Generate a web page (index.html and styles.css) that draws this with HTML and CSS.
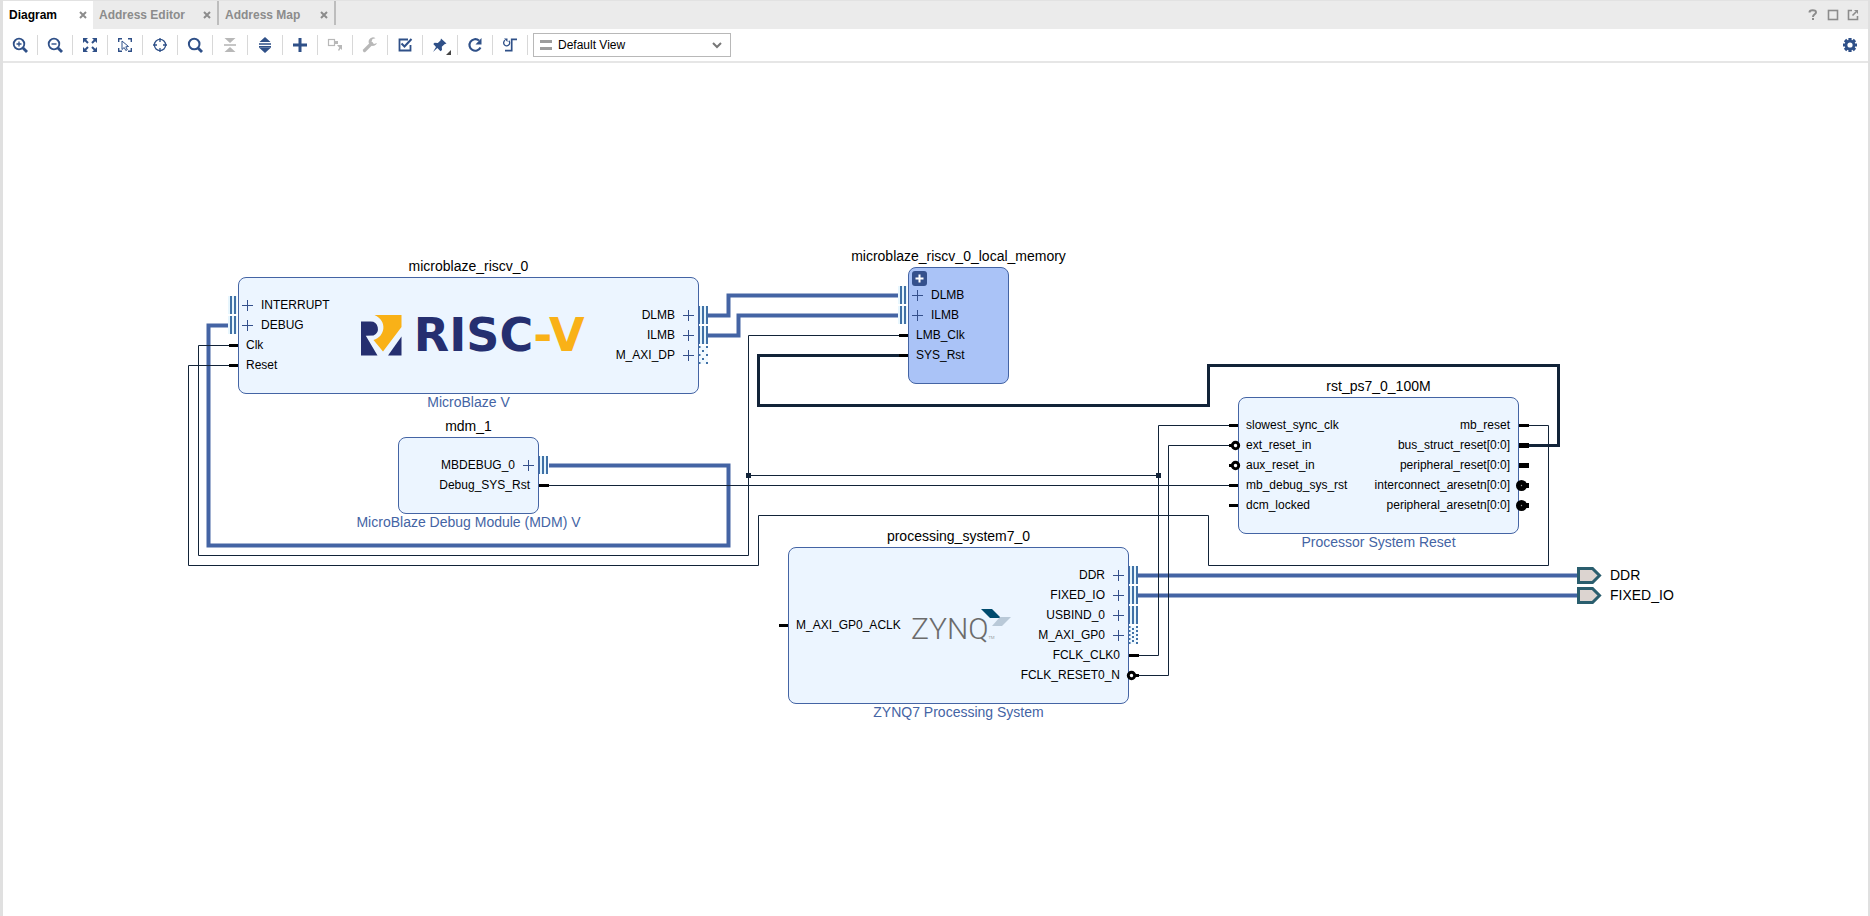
FILE: index.html
```html
<!DOCTYPE html>
<html lang="en">
<head>
<meta charset="utf-8">
<title>Block Design - Diagram</title>
<link rel="stylesheet" href="styles.css">
</head>
<body>
<div class="app">
  <header class="tabbar">
    <div class="tab tab-active">
      <button class="tab-label" type="button">Diagram</button>
      <button class="tab-close" type="button" aria-label="Close Diagram"><svg width="8" height="8" viewBox="0 0 8 8"><path d="M1 1l6 6M7 1l-6 6"/></svg></button>
    </div>
    <div class="tab tab-editor">
      <button class="tab-label" type="button">Address Editor</button>
      <button class="tab-close" type="button" aria-label="Close Address Editor"><svg width="8" height="8" viewBox="0 0 8 8"><path d="M1 1l6 6M7 1l-6 6"/></svg></button>
    </div>
    <div class="tab tab-map">
      <button class="tab-label" type="button">Address Map</button>
      <button class="tab-close" type="button" aria-label="Close Address Map"><svg width="8" height="8" viewBox="0 0 8 8"><path d="M1 1l6 6M7 1l-6 6"/></svg></button>
    </div>
    <div class="window-actions">
      <button class="win-btn" type="button" aria-label="Help"><svg width="12" height="12" viewBox="0 0 12 12"><path d="M2.500 3.500C2.500 .5 9 .5 9 3.300 9 5.500 6 5 6 8" fill="none" stroke="#8c8c8c" stroke-width="2"/><rect x="5" y="9" width="2" height="2" fill="#8c8c8c"/></svg></button>
      <button class="win-btn" type="button" aria-label="Maximize"><svg width="12" height="12" viewBox="0 0 12 12"><rect x="1.500" y="1.500" width="9" height="9" fill="none" stroke="#8c8c8c" stroke-width="1.600"/></svg></button>
      <button class="win-btn" type="button" aria-label="Float"><svg width="12" height="12" viewBox="0 0 12 12"><path d="M5 1.500H1.500v9h9V7" fill="none" stroke="#8c8c8c" stroke-width="1.600"/><path d="M5.500 6.500L9 3" stroke="#8c8c8c" stroke-width="1.600"/><path d="M7 1h4v4z" fill="#8c8c8c"/></svg></button>
    </div>
  </header>

  <div class="toolbar">
    <button class="tool" type="button" aria-label="Zoom In"><svg class="ico" viewBox="0 0 16 16"><circle cx="7" cy="7" r="5.300"/><path d="M11 11l4 4" stroke-width="2.800"/><path d="M4.500 7h5M7 4.500v5" stroke-width="1.300"/></svg></button>
    <button class="tool" type="button" aria-label="Zoom Out"><svg class="ico" viewBox="0 0 16 16"><circle cx="7" cy="7" r="5.300"/><path d="M11 11l4 4" stroke-width="2.800"/><path d="M4.500 7h5" stroke-width="1.400"/></svg></button>
    <button class="tool" type="button" aria-label="Zoom Fit"><svg class="ico" viewBox="0 0 16 16"><path d="M2 2l4 4M14 2l-4 4M2 14l4-4M14 14l-4-4" stroke-width="2"/><path d="M1 1h5L1 6zM15 1v5l-5-5zM1 15v-5l5 5zM15 15h-5l5-5z" class="solid"/></svg></button>
    <button class="tool" type="button" aria-label="Zoom to Selection"><svg class="ico" viewBox="0 0 16 16"><path d="M1.700 5V1.700H5M11 1.700h3.300V5M1.700 11v3.300H5M11 14.300h3.300V11" stroke-width="1.400"/><path d="M5 4v8.500l2.200-2 1.600 3 1.500-.8-1.500-2.900 2.700-.3z" stroke-width="1"/></svg></button>
    <button class="tool" type="button" aria-label="Auto Fit Selection"><svg class="ico" viewBox="0 0 16 16"><circle cx="8" cy="8" r="5.600" stroke-width="1.300"/><path d="M8 1v4M8 11v4M1 8h4M11 8h4" stroke-width="1.300"/></svg></button>
    <button class="tool" type="button" aria-label="Search"><svg class="ico" viewBox="0 0 16 16"><circle cx="7.200" cy="7" r="5.300" stroke-width="2"/><path d="M11 11l4 4" stroke-width="2.800"/></svg></button>
    <button class="tool" type="button" aria-label="Collapse All" disabled><svg class="ico" viewBox="0 0 16 16"><path d="M2.500 1h11L8 6zM2.500 15h11L8 10z" class="solid"/><path d="M2 8h12" stroke-width="1.600"/></svg></button>
    <button class="tool" type="button" aria-label="Expand All"><svg class="ico" viewBox="0 0 16 16"><path d="M8 0l5.500 5h-11zM8 16l5.500-5h-11z" class="solid"/><path d="M2 7h12M2 9.800h12" stroke-width="1.700"/></svg></button>
    <button class="tool" type="button" aria-label="Add IP"><svg class="ico" viewBox="0 0 16 16"><path d="M8 1v14M1 8h14" stroke-width="3"/></svg></button>
    <button class="tool" type="button" aria-label="Make External" disabled><svg class="ico" viewBox="0 0 16 16"><rect x="1.500" y="2.500" width="6" height="6" stroke-width="1.200"/><path d="M7 5h3" stroke-width="1.200"/><rect x="8" y="4" width="3" height="3" class="solid"/><path d="M10 8h5v5l-1.500-1.500L12 14l-1-1 1.300-2.300z" class="solid"/></svg></button>
    <button class="tool" type="button" aria-label="Customize Block" disabled><svg class="ico" viewBox="0 0 16 16"><path d="M2.500 13.500l7-7" stroke-width="3.200" stroke-linecap="round"/><path d="M13.500 1.200A4.300 4.300 0 1 0 15 6l-3 1-2.500-2.300 1-2.700z" class="solid"/></svg></button>
    <button class="tool" type="button" aria-label="Validate Design"><svg class="ico" viewBox="0 0 16 16"><path d="M11 2.500H2.500v11h11V8" stroke-width="1.800"/><path d="M4.500 6.500L7.500 9.500 14.500 2" stroke-width="2"/></svg></button>
    <button class="tool" type="button" aria-label="Pin"><svg class="ico" viewBox="0 0 16 16"><path d="M9 1.500l5.500 5-2 .8-2.700 2.500.2 3.200-1.500 1.200-3.200-3.100L1 15l3-5L1.300 7l1.300-1.300 3.200.3 2.700-2.600z" class="solid"/></svg><svg class="corner" width="5" height="5" viewBox="0 0 5 5"><path d="M5 0v5H0z"/></svg></button>
    <button class="tool" type="button" aria-label="Regenerate Layout"><svg class="ico" viewBox="0 0 16 16"><path d="M13.500 10.500A5.800 5.800 0 1 1 12 3.500" stroke-width="2.100"/><path d="M14.500 1v6.500H8.500z" class="solid"/></svg></button>
    <button class="tool" type="button" aria-label="Optimize Routing"><svg class="ico" viewBox="0 0 16 16"><path d="M6.800 3.700A3 3 0 1 1 3 3.300" stroke-width="1.300"/><path d="M2 1.500h3.500V5z" class="solid"/><path d="M3 13.700h6.700V2.300H15" stroke-width="1.700"/></svg></button>
    <div class="view-select">
      <svg width="12" height="10" viewBox="0 0 12 10"><path d="M0 0h12v3H0zM0 7h12v3H0z" fill="#9c9c9c"/></svg>
      <select aria-label="View"><option>Default View</option></select>
      <svg width="10" height="7" viewBox="0 0 10 7"><path d="M1 1l4 4 4-4" fill="none" stroke="#777" stroke-width="2"/></svg>
    </div>
    <button class="settings" type="button" aria-label="Settings"><svg width="16" height="16" viewBox="0 0 16 16"><path d="M8 1v14M1 8h14M3 3l10 10M13 3L3 13" stroke="#2f5088" stroke-width="3.200"/><circle cx="8" cy="8" r="5.300" fill="#2f5088"/><circle cx="8" cy="8" r="2.600" fill="#fff"/></svg></button>
  </div>

  <main class="canvas">
    <section class="node node-microblaze">
      <h2 class="node-name">microblaze_riscv_0</h2>
      <ul class="ports">
        <li class="port bus"><svg class="plus" viewBox="0 0 12 12"><path d="M0 6.500h11M5.500 1v11"/></svg>INTERRUPT</li>
        <li class="port bus"><svg class="plus" viewBox="0 0 12 12"><path d="M0 6.500h11M5.500 1v11"/></svg>DEBUG</li>
        <li class="port">Clk</li>
        <li class="port">Reset</li>
      </ul>
      <div class="riscv-logo">
        <svg width="41" height="41" viewBox="0 0 41 41"><path d="M0 6.500h9.500a7.300 7.300 0 0 1 3 14L4.800 20.800 16.500 40.500H0z" fill="#252f70"/><path d="M13.500 0H40.500v12L22 36.500 12.500 25C24 22 27 6 13.500 0z" fill="#f9b117"/><path d="M40.500 21.500v19H27z" fill="#252f70"/></svg>
        <span class="riscv-word">RISC<b>-V</b></span>
      </div>
      <ul class="ports ports-out">
        <li class="port bus">DLMB<svg class="plus" viewBox="0 0 12 12"><path d="M0 6.500h11M5.500 1v11"/></svg></li>
        <li class="port bus">ILMB<svg class="plus" viewBox="0 0 12 12"><path d="M0 6.500h11M5.500 1v11"/></svg></li>
        <li class="port bus">M_AXI_DP<svg class="plus" viewBox="0 0 12 12"><path d="M0 6.500h11M5.500 1v11"/></svg></li>
      </ul>
      <p class="node-type">MicroBlaze V</p>
    </section>

    <section class="node node-mdm">
      <h2 class="node-name">mdm_1</h2>
      <ul class="ports ports-out">
        <li class="port bus">MBDEBUG_0<svg class="plus" viewBox="0 0 12 12"><path d="M0 6.500h11M5.500 1v11"/></svg></li>
        <li class="port">Debug_SYS_Rst</li>
      </ul>
      <p class="node-type">MicroBlaze Debug Module (MDM) V</p>
    </section>

    <section class="node node-memory">
      <h2 class="node-name">microblaze_riscv_0_local_memory</h2>
      <button class="expand" type="button" aria-label="Expand hierarchy"><svg width="15" height="15" viewBox="0 0 15 15"><path d="M7.500 3.500v8M3.500 7.500h8" stroke="#fff" stroke-width="2"/></svg></button>
      <ul class="ports">
        <li class="port bus"><svg class="plus" viewBox="0 0 12 12"><path d="M0 6.500h11M5.500 1v11"/></svg>DLMB</li>
        <li class="port bus"><svg class="plus" viewBox="0 0 12 12"><path d="M0 6.500h11M5.500 1v11"/></svg>ILMB</li>
        <li class="port">LMB_Clk</li>
        <li class="port">SYS_Rst</li>
      </ul>
    </section>

    <section class="node node-zynq">
      <h2 class="node-name">processing_system7_0</h2>
      <ul class="ports">
        <li class="port">M_AXI_GP0_ACLK</li>
      </ul>
      <svg class="zynq-logo" width="100" height="32" viewBox="0 0 100 32"><text x="0" y="30">ZYNQ<tspan class="tm">TM</tspan></text><path d="M70 0h11l9 9H79z" fill="#004b6e"/><path d="M89 8h11l-9 9H81z" fill="#b9c9d8"/></svg>
      <ul class="ports ports-out">
        <li class="port bus">DDR<svg class="plus" viewBox="0 0 12 12"><path d="M0 6.500h11M5.500 1v11"/></svg></li>
        <li class="port bus">FIXED_IO<svg class="plus" viewBox="0 0 12 12"><path d="M0 6.500h11M5.500 1v11"/></svg></li>
        <li class="port bus">USBIND_0<svg class="plus" viewBox="0 0 12 12"><path d="M0 6.500h11M5.500 1v11"/></svg></li>
        <li class="port bus">M_AXI_GP0<svg class="plus" viewBox="0 0 12 12"><path d="M0 6.500h11M5.500 1v11"/></svg></li>
        <li class="port">FCLK_CLK0</li>
        <li class="port">FCLK_RESET0_N</li>
      </ul>
      <p class="node-type">ZYNQ7 Processing System</p>
    </section>

    <section class="node node-reset">
      <h2 class="node-name">rst_ps7_0_100M</h2>
      <ul class="ports">
        <li class="port">slowest_sync_clk</li>
        <li class="port">ext_reset_in</li>
        <li class="port">aux_reset_in</li>
        <li class="port">mb_debug_sys_rst</li>
        <li class="port">dcm_locked</li>
      </ul>
      <ul class="ports ports-out">
        <li class="port">mb_reset</li>
        <li class="port">bus_struct_reset[0:0]</li>
        <li class="port">peripheral_reset[0:0]</li>
        <li class="port">interconnect_aresetn[0:0]</li>
        <li class="port">peripheral_aresetn[0:0]</li>
      </ul>
      <p class="node-type">Processor System Reset</p>
    </section>

    <div class="ext-port ext-ddr"><svg width="25" height="17" viewBox="0 0 25 17"><path d="M1.500 1.500h14l7 7-7 7h-14z"/></svg>DDR</div>
    <div class="ext-port ext-fixed"><svg width="25" height="17" viewBox="0 0 25 17"><path d="M1.500 1.500h14l7 7-7 7h-14z"/></svg>FIXED_IO</div>

    <svg class="wires">
      <defs>
        <g id="bus-in"><path d="M-10-9.500H-1v18h-9z" fill="#e8f6fd"/><path d="M-8-9.500h2v18h-2zM-4-9.500h2v18h-2z" fill="#4071a6"/></g>
        <g id="bus-out"><path d="M0-9.500h9v18H0z" fill="#e8f6fd"/><path d="M0-9.500h1v18H0zM3-9.500h2v18H3zM7-9.500h2v18H7z" fill="#4071a6"/></g>
        <g id="dots-out"><path d="M0-9.500h9v18H0z" fill="#f2faff"/><path d="M.5-9.500v18M8-9.500v18" class="dots"/><path d="M4-5.500v14" class="dots"/></g>
        <g id="dots-dense"><path d="M0-9.500h9v18H0z" fill="#f2faff"/><path d="M.5-9.500v18M8-9.500v18M4-7.500v16" class="dots-fine"/></g>
        <path id="pin-in" d="M-9-1.500h9v3h-9z"/>
        <path id="pin-out" d="M0-1.500h10v3H0z"/>
        <path id="pin-wide" d="M0-2.500h10v5H0z"/>
        <g id="inv-in"><path d="M-9-1.500h4v3h-4z"/><circle cx="-2.500" r="3.200" fill="#fff" stroke="#000" stroke-width="3"/></g>
        <g id="inv-out"><path d="M5-1.500h5v3H5z"/><circle cx="2.500" r="3.200" fill="#fff" stroke="#000" stroke-width="3"/></g>
        <g id="inv-wide"><path d="M5-2.500h5v5H5z"/><circle cx="2.500" r="5.500"/><circle cx="2.500" r=".7" fill="#999"/></g>
      </defs>
      <g class="bus-wire">
        <path d="M226 262.500H205.500V482.500H725.500V402.500H546"/>
        <path d="M705 252.500H725.500V232.500H895"/>
        <path d="M705 272.500H735.500V252.500H895"/>
        <path d="M1135 512.500H1574M1135 532.500H1574"/>
      </g>
      <g class="wire">
        <path d="M226 282.500H195.500V492.500H745.500V272.500H896"/>
        <path d="M745.500 412.500H1155.500M1226 362.500H1155.500V592.500H1135"/>
        <path d="M226 302.500H185.500V502.500H755.500V452.500H1205.500V502.500H1545.500V362.500H1526"/>
        <path d="M546 422.500H1226"/>
        <path d="M1135 612.500H1165.500V382.500H1226"/>
        <path class="wire-wide" d="M896 292.500H755.500V342.500H1205.500V302.500H1555.500V382.500H1526"/>
      </g>
      <path d="M743 410h5v5h-5zM1153 410h5v5h-5z" fill="#122338"/>
      <use href="#bus-in" x="235" y="242.500"/><use href="#bus-in" x="235" y="262.500"/>
      <use href="#pin-in" x="235" y="282.500"/><use href="#pin-in" x="235" y="302.500"/>
      <use href="#bus-out" x="696" y="252.500"/><use href="#bus-out" x="696" y="272.500"/><use href="#dots-out" x="696" y="292.500"/>
      <use href="#bus-out" x="536" y="402.500"/><use href="#pin-out" x="536" y="422.500"/>
      <use href="#bus-in" x="905" y="232.500"/><use href="#bus-in" x="905" y="252.500"/>
      <use href="#pin-in" x="905" y="272.500"/><use href="#pin-in" x="905" y="292.500"/>
      <use href="#pin-in" x="785" y="562.500"/>
      <use href="#bus-out" x="1126" y="512.500"/><use href="#bus-out" x="1126" y="532.500"/><use href="#bus-out" x="1126" y="552.500"/>
      <use href="#dots-dense" x="1126" y="572.500"/><use href="#pin-out" x="1126" y="592.500"/><use href="#inv-out" x="1126" y="612.500"/>
      <use href="#pin-in" x="1235" y="362.500"/><use href="#inv-in" x="1235" y="382.500"/><use href="#inv-in" x="1235" y="402.500"/>
      <use href="#pin-in" x="1235" y="422.500"/><use href="#pin-in" x="1235" y="442.500"/>
      <use href="#pin-out" x="1516" y="362.500"/><use href="#pin-wide" x="1516" y="382.500"/><use href="#pin-wide" x="1516" y="402.500"/>
      <use href="#inv-wide" x="1516" y="422.500"/><use href="#inv-wide" x="1516" y="442.500"/>
    </svg>
  </main>
</div>
</body>
</html>
```
FILE: styles.css
```css
* {
  box-sizing: border-box;
}

body {
  margin: 0;
  font: 12px/20px "Liberation Sans", Arial, sans-serif;
  color: #000;
  background: #fff;
}

button,
select {
  margin: 0;
  padding: 0;
  border: 0;
  background: none;
  font: inherit;
  color: inherit;
}

svg {
  display: block;
  flex: none;
}

.app {
  display: flex;
  flex-direction: column;
  height: 100vh;
  border-left: 3px solid #e0e0e0;
  border-right: 2px solid #e0e0e0;
}

/* Tabs */

.tabbar {
  display: flex;
  height: 29px;
  padding-top: 1px;
  background: #ebebeb;
  box-shadow: inset 0 1px #e2e2e2;
}

.tab {
  display: flex;
  align-items: center;
  justify-content: space-between;
  height: 24px;
  padding: 4px 6px 0;
  border-right: 2px solid #bdbdbd;
  color: #8c8c8c;
  font-weight: bold;
}

.tab-active {
  width: 90px;
  height: 28px;
  padding-bottom: 4px;
  border-right: 0;
  background: #fff;
  color: #000;
}

.tab-editor {
  width: 126px;
}

.tab-map {
  width: 117px;
}

.tab-close svg {
  fill: none;
  stroke: #8c8c8c;
  stroke-width: 2;
}

.window-actions {
  display: flex;
  align-items: center;
  gap: 8px;
  margin-left: auto;
  padding-right: 9px;
}

/* Toolbar */

.toolbar {
  display: flex;
  align-items: center;
  height: 34px;
  border-bottom: 2px solid #e6e6e6;
}

.tool {
  position: relative;
  display: flex;
  justify-content: center;
  align-items: center;
  width: 35px;
  height: 20px;
  border-right: 1px solid #d8d8d8;
}

.ico {
  width: 16px;
  height: 16px;
  fill: none;
  stroke: #2f5088;
  stroke-width: 1.8;
}

.ico .solid {
  fill: #2f5088;
  stroke: none;
}

.tool:disabled .ico {
  stroke: #b8b8b8;
}

.tool:disabled .solid {
  fill: #b8b8b8;
}

.corner {
  position: absolute;
  right: 6px;
  bottom: 0;
  fill: #444;
}

.view-select {
  position: relative;
  display: flex;
  align-items: center;
  width: 198px;
  height: 24px;
  margin-left: 5px;
  padding: 0 8px 0 6px;
  border: 1px solid #b8b8b8;
}

.view-select select {
  flex: 1;
  appearance: none;
  padding-left: 6px;
  color: #000;
}

.settings {
  margin-left: auto;
  padding-right: 10px;
}

/* Diagram */

.canvas {
  position: relative;
  flex: 1;
  overflow: hidden;
}

.wires {
  position: absolute;
  inset: 0;
  width: 100%;
  height: 100%;
  pointer-events: none;
}

.wire {
  fill: none;
  stroke: #122338;
}

.wire-wide {
  stroke-width: 3;
}

.bus-wire {
  fill: none;
  stroke: #4464a4;
  stroke-width: 4;
}

.dots {
  stroke: #4071a6;
  stroke-width: 2;
  stroke-dasharray: 2 6;
}

.dots-fine {
  stroke: #4071a6;
  stroke-width: 2;
  stroke-dasharray: 2 2;
}

.node {
  position: absolute;
  display: flex;
  align-items: center;
  justify-content: space-between;
  padding: 17px 0 18px;
  border: 1px solid #4464a4;
  border-radius: 8px;
  background: #ecf5ff;
}

.node-microblaze {
  left: 235px;
  top: 214px;
  width: 461px;
}

.node-mdm {
  left: 395px;
  top: 374px;
  width: 141px;
  justify-content: flex-end;
}

.node-memory {
  left: 905px;
  top: 204px;
  width: 101px;
  background: #aac3f7;
}

.node-zynq {
  left: 785px;
  top: 484px;
  width: 341px;
}

.node-reset {
  left: 1235px;
  top: 334px;
  width: 281px;
}

.node-name,
.node-type {
  position: absolute;
  left: 50%;
  margin: 0;
  font-size: 14px;
  font-weight: normal;
  line-height: 16px;
  white-space: nowrap;
  transform: translateX(-50%);
}

.node-name {
  bottom: 100%;
  margin-bottom: 4px;
}

.node-type {
  top: 100%;
  margin-top: 1px;
  color: #4464a4;
}

.ports {
  margin: 0;
  padding: 0;
  list-style: none;
}

.port {
  display: flex;
  align-items: center;
  padding: 0 7px;
  white-space: nowrap;
}

.ports-out .port {
  justify-content: flex-end;
  padding-right: 8px;
}

.port.bus,
.ports-out .bus {
  gap: 7px;
  padding: 0 3px;
}

.ports-out .bus {
  gap: 8px;
}

.plus {
  width: 12px;
  height: 12px;
  stroke: #34508c;
}

.expand {
  position: absolute;
  left: 3px;
  top: 3px;
  border-radius: 3px;
  background: #34508c;
}

.riscv-logo {
  display: flex;
  align-items: center;
  gap: 12px;
}

.riscv-word {
  font: bold 46px/46px "DejaVu Sans", sans-serif;
  color: #252f70;
}

.riscv-word b {
  color: #f9b117;
}

.zynq-logo {
  overflow: visible;
  fill: #6b6b6b;
  font: 300 30px Roboto, sans-serif;
}

.zynq-logo .tm {
  font-size: 4px;
}

.ext-port {
  position: absolute;
  left: 1574px;
  display: flex;
  align-items: center;
  gap: 8px;
  font-size: 14px;
}

.ext-port path {
  fill: #dcd4d0;
  stroke: #2a5e6e;
  stroke-width: 3;
}

.ext-ddr {
  top: 502px;
}

.ext-fixed {
  top: 522px;
}
```
